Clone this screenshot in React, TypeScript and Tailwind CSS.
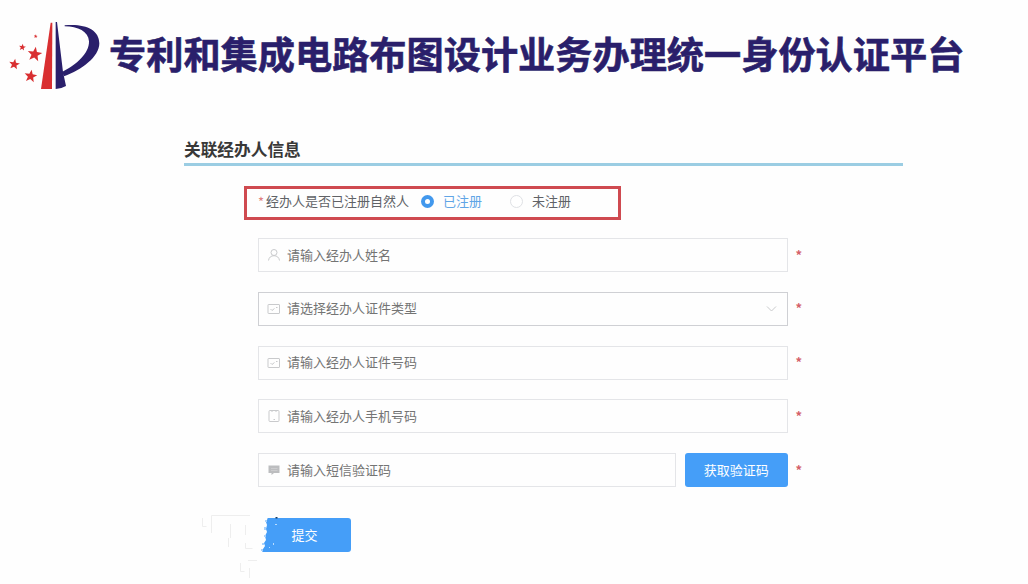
import { ReactNode } from "react";

const STARS = [
  { x: 107, y: 79, r: 6 },
  { x: 67, y: 112, r: 11 },
  { x: 104, y: 133, r: 23 },
  { x: 43, y: 163, r: 17 },
  { x: 92, y: 199, r: 20 },
];

const starPoints = (cx: number, cy: number, r: number) =>
  Array.from({ length: 10 }, (_, i) => {
    const radius = i % 2 === 0 ? r : r * 0.42;
    const angle = (Math.PI / 5) * i - Math.PI / 2 + 0.15;
    return `${cx + radius * Math.cos(angle)},${cy + radius * Math.sin(angle)}`;
  }).join(" ");

const Logo = () => (
  <svg className="h-[90px] w-[108px] shrink-0" viewBox="0 0 324 270">
    {STARS.map((s) => (
      <polygon key={s.x} points={starPoints(s.x, s.y, s.r)} fill="#d92f31" />
    ))}
    <path d="M152 38h5l-1 199h-33z" fill="#d92f31" />
    <path d="M167 36h4l18 150 9 42q-13 8-31 9z" fill="#2a1f6b" />
    <path
      d="M194 46C254 40 298 58 298 100C298 140 246 180 192 199L186 186C230 164 268 130 267 94C265 64 234 50 194 49z"
      fill="#2a1f6b"
    />
  </svg>
);

const iconProps = {
  className: "h-3.5 w-3.5 shrink-0",
  viewBox: "0 0 14 14",
  fill: "none",
  stroke: "#c9cacc",
};

const UserIcon = () => (
  <svg {...iconProps}>
    <circle cx="7" cy="4.5" r="3" />
    <path d="M1.500 12.500c.4-3 2.500-4.800 5.500-4.800s5.100 1.800 5.500 4.800" />
  </svg>
);

const CardIcon = () => (
  <svg {...iconProps}>
    <rect x="1" y="2.500" width="11.500" height="9" rx="0.5" />
    <path d="M3.500 7l1.500 1.500 2.500-2M9 5.500h1.500" />
  </svg>
);

const PhoneIcon = () => (
  <svg {...iconProps}>
    <rect x="2" y="1.500" width="10" height="11" rx="1" />
    <path d="M4.500 2.500h1M8.500 2.500h1M6.500 10.500h1.500" />
  </svg>
);

const MessageIcon = () => (
  <svg {...iconProps} stroke="none">
    <path d="M1.500 2.500h11v7.500H7l-2.500 2v-2h-3z" fill="#bcbdbf" />
    <path d="M4 5.500h6.500M4 7.500h6.500" stroke="#d6d6d8" strokeWidth="0.6" />
  </svg>
);

const ChevronIcon = () => (
  <svg {...iconProps}>
    <path d="M2 4.500l4.500 4.500L11 4.500" />
  </svg>
);

type FieldProps = {
  icon: ReactNode;
  placeholder: string;
  select?: boolean;
  action?: ReactNode;
};

const Field = ({ icon, placeholder, select, action }: FieldProps) => (
  <div className="flex h-[34px] items-center">
    <div className="flex h-full w-[529.500px] gap-[9px]">
      <div
        className={`flex flex-1 items-center gap-1.5 border pr-2 pl-2 ${
          select ? "border-[#cfd0d4]" : "border-[#e4e5e8]"
        }`}
      >
        {icon}
        <span className="flex-1 pb-0.5 text-[13px] leading-none text-[#747474]">
          {placeholder}
        </span>
        {select && <ChevronIcon />}
      </div>
      {action}
    </div>
    <span className="ml-2 pb-0.5 text-[13px] leading-none font-bold text-[#d4616b]">*</span>
  </div>
);

// worn edge at the left side of the submit button
const WornEdge = () => (
  <svg className="absolute -top-1 -left-[62px] h-[68px] w-[90px]" viewBox="0 0 90 68" fill="none">
    <path
      d="M61 3h7l-1 3-1 2 1 3-1 4 1 3-2 4 1 4-2 3 1 3-2 3-1 4h-1z"
      fill="#fefefe"
    />
    <path
      d="M2.500 4v8.500h4M11.500 19V1.500H50M30.500 10v14M28.500 24v9M45.500 11v10M45.500 29v5.500h7M48 46.500h9M40.500 49v8.500h4M49.500 54v10"
      stroke="#eeeeee"
    />
    <path
      d="M65 6h2v2h-2zM64 13h2v3h-2zM64 21h2v2h-2zM62 29h2v2h-2zM61 35h2v2h-2z"
      fill="#a9d2fc"
    />
    <path d="M75 10h2v1h-2zM73 29h1v2h-1zM69 33h1v1h-1z" fill="#b9dcfe" />
    <path d="M75.500 3h2v1.500h-2z" fill="#163a60" />
  </svg>
);

const App = () => {
  return (
    <div
      className="min-h-[584px] w-[1028px] bg-[#fefefe] pt-2.5 font-['Noto_Sans_CJK_SC','Liberation_Sans',sans-serif]"
      lang="zh-CN"
    >
      <header className="flex h-[90px] items-center">
        <Logo />
        <h1 className="pb-0.5 pl-px text-[37.200px] leading-none font-bold whitespace-nowrap text-[#2a1f6b] [-webkit-text-stroke:0.6px_#2a1f6b]">
          专利和集成电路布图设计业务办理统一身份认证平台
        </h1>
      </header>

      <main className="ml-[184px] w-[719px] pt-[37px]">
        <h2 className="h-[29px] border-b-[3px] border-[#9bcde3] pt-1 text-[16.700px] leading-none font-bold text-[#383838]">
          关联经办人信息
        </h2>

        <div className="mt-5 ml-[60px] flex h-[34px] w-[377px] items-center border-[3px] border-[#cf4a50] pb-1 pl-[11px] text-[13px] leading-none text-[#606266]">
          <span className="mr-[3px] w-[5px] text-[13px] text-[#e08080]">*</span>
          <span className="-mt-0.5">经办人是否已注册自然人</span>
          <span className="ml-3 flex h-[13px] w-[13px] items-center justify-center rounded-full bg-[#4298ed]">
            <span className="h-[5px] w-[5px] rounded-full bg-white" />
          </span>
          <span className="-mt-0.5 ml-[9px] text-[#60a5e6]">已注册</span>
          <span className="ml-[28px] h-[13px] w-[13px] rounded-full border border-[#dfe1e5] bg-white" />
          <span className="-mt-0.5 ml-[9px]">未注册</span>
        </div>

        <div className="mt-[18px] ml-[74px] flex flex-col gap-[19.800px]">
          <Field icon={<UserIcon />} placeholder="请输入经办人姓名" />
          <Field icon={<CardIcon />} placeholder="请选择经办人证件类型" select />
          <Field icon={<CardIcon />} placeholder="请输入经办人证件号码" />
          <Field icon={<PhoneIcon />} placeholder="请输入经办人手机号码" />
          <Field
            icon={<MessageIcon />}
            placeholder="请输入短信验证码"
            action={
              <button className="w-[102.500px] rounded-[3px] bg-[#459ef8] pb-0.5 text-[13px] leading-none text-white">
                获取验证码
              </button>
            }
          />
        </div>

        <div className="relative mt-[31px] ml-[78px] h-[34px] w-[89px]">
          <button className="h-full w-full rounded-r-[3px] bg-[#459ef8] pr-1 pb-0.5 text-[13px] leading-none text-white">
            提交
          </button>
          <WornEdge />
        </div>
      </main>
    </div>
  );
};

export default App;
